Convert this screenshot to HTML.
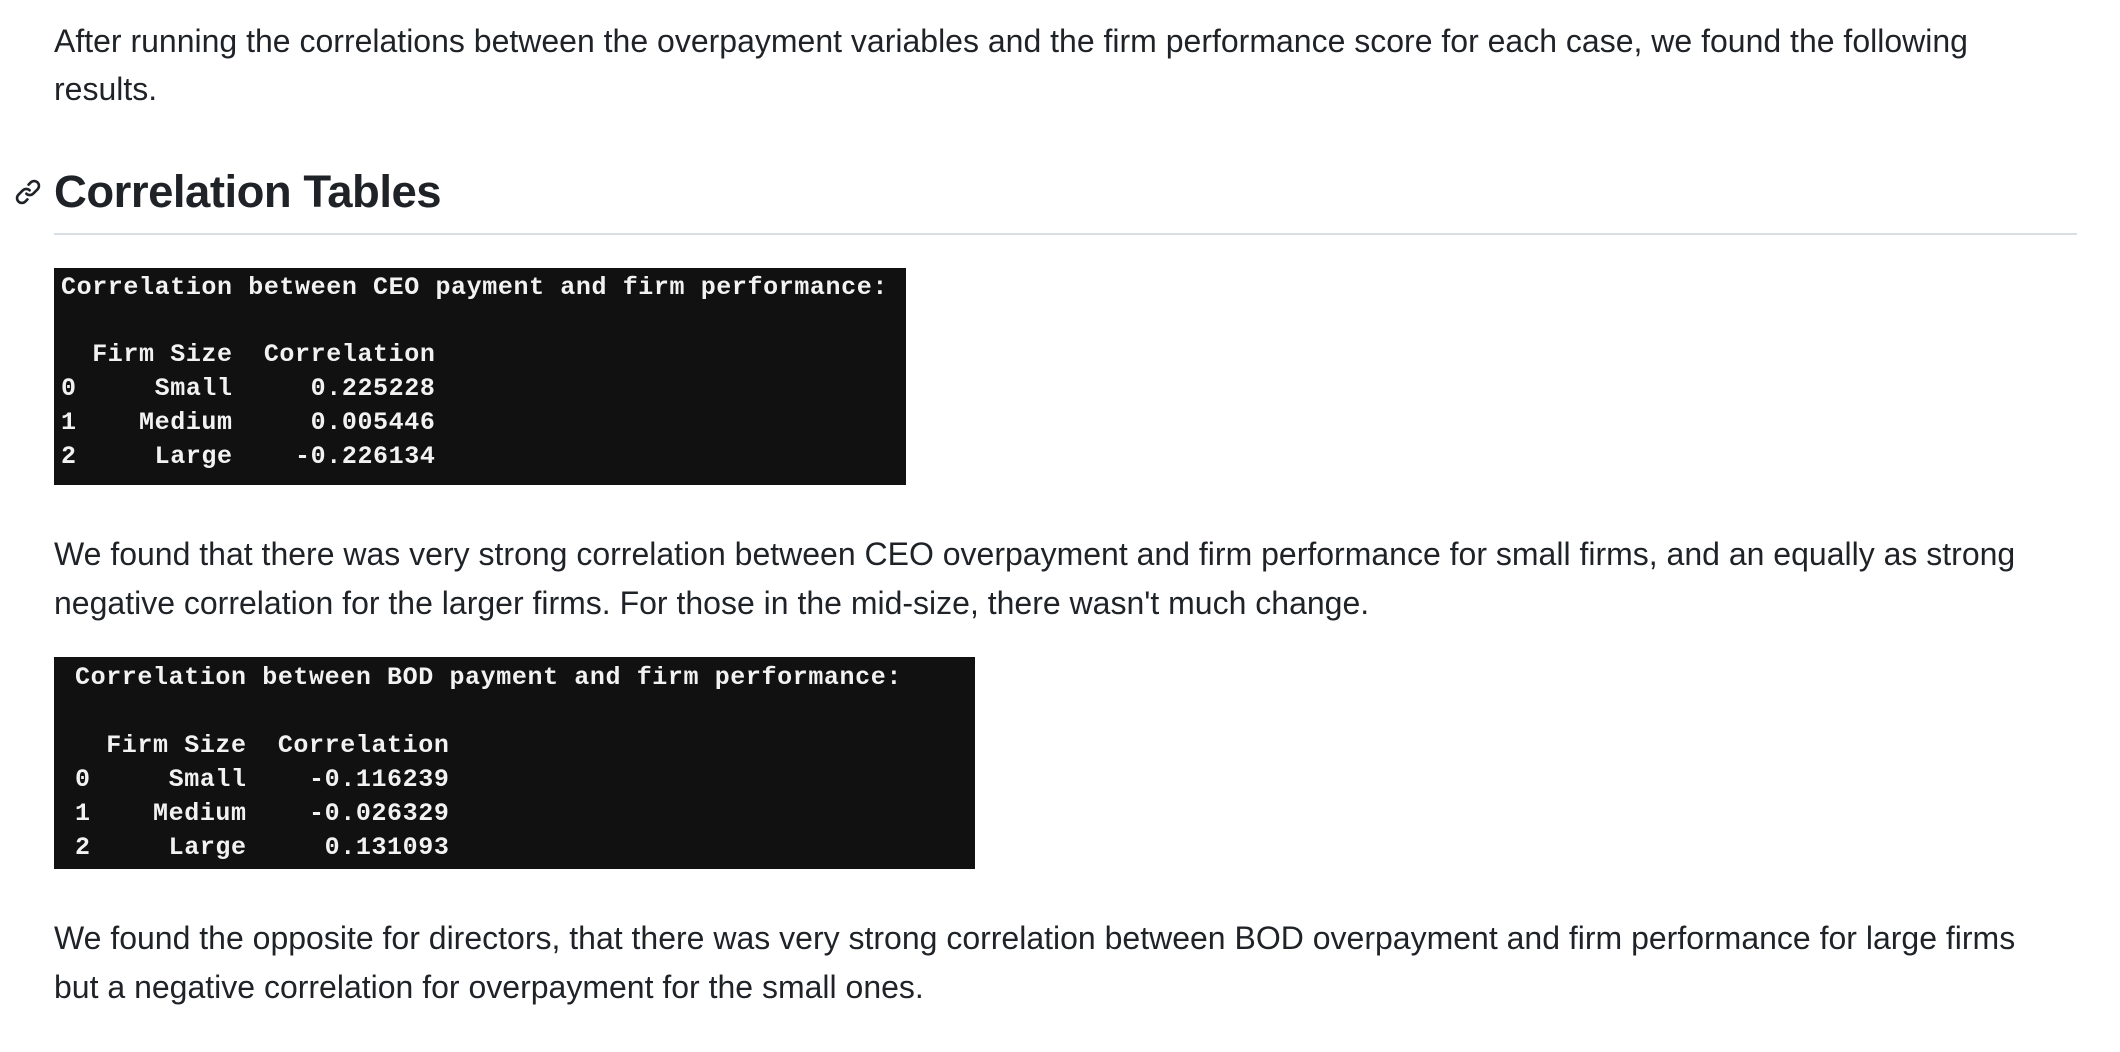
<!DOCTYPE html>
<html><head><style>
html,body{margin:0;padding:0;background:#fff;width:2120px;height:1052px;overflow:hidden}
.t{position:absolute;left:54px;font-family:"Liberation Sans",sans-serif;font-size:32px;color:#1f2328;white-space:nowrap;line-height:48px}
.h{position:absolute;left:54px;top:162px;font-family:"Liberation Sans",sans-serif;font-size:45.5px;font-weight:bold;color:#1f2328;line-height:60px;letter-spacing:-0.5px}
.rule{position:absolute;left:54px;top:233px;width:2023px;height:2px;background:#d8dee4}
.box{position:absolute;background:#111}
.m{position:absolute;font-family:"Liberation Mono","DejaVu Sans Mono",monospace;font-size:25px;font-weight:bold;color:#f2f2f2;white-space:pre;line-height:34px;letter-spacing:0.6px}
</style></head><body>
<div class="t" style="top:17px">After running the correlations between the overpayment variables and the firm performance score for each case, we found the following</div>
<div class="t" style="top:65px">results.</div>
<svg style="position:absolute;left:14px;top:178px" width="28" height="28" viewBox="0 0 16 16"><path fill="#1f2328" d="M7.775 3.275a.75.75 0 0 0 1.06 1.06l1.25-1.25a2 2 0 1 1 2.83 2.83l-2.5 2.5a2 2 0 0 1-2.83 0 .75.75 0 0 0-1.06 1.06 3.5 3.5 0 0 0 4.95 0l2.5-2.5a3.5 3.5 0 0 0-4.95-4.95l-1.25 1.25zm-4.69 9.64a2 2 0 0 1 0-2.83l2.5-2.5a2 2 0 0 1 2.83 0 .75.75 0 0 0 1.06-1.06 3.5 3.5 0 0 0-4.95 0l-2.5 2.5a3.5 3.5 0 0 0 4.95 4.95l1.25-1.25a.75.75 0 0 0-1.06-1.06l-1.25 1.25a2 2 0 0 1-2.83 0z"/></svg>
<div class="h">Correlation Tables</div>
<div class="rule"></div>
<div class="box" style="left:54px;top:268px;width:852px;height:217px">
<div class="m" style="left:7px;top:3px">Correlation between CEO payment and firm performance:</div>
<div class="m" style="left:7px;top:70px">  Firm Size  Correlation
0     Small     0.225228
1    Medium     0.005446
2     Large    -0.226134</div>
</div>
<div class="t" style="top:530px">We found that there was very strong correlation between CEO overpayment and firm performance for small firms, and an equally as strong</div>
<div class="t" style="top:579px">negative correlation for the larger firms. For those in the mid-size, there wasn't much change.</div>
<div class="box" style="left:54px;top:657px;width:921px;height:212px">
<div class="m" style="left:21px;top:4px">Correlation between BOD payment and firm performance:</div>
<div class="m" style="left:21px;top:72px">  Firm Size  Correlation
0     Small    -0.116239
1    Medium    -0.026329
2     Large     0.131093</div>
</div>
<div class="t" style="top:914px">We found the opposite for directors, that there was very strong correlation between BOD overpayment and firm performance for large firms</div>
<div class="t" style="top:963px">but a negative correlation for overpayment for the small ones.</div>
</body></html>
